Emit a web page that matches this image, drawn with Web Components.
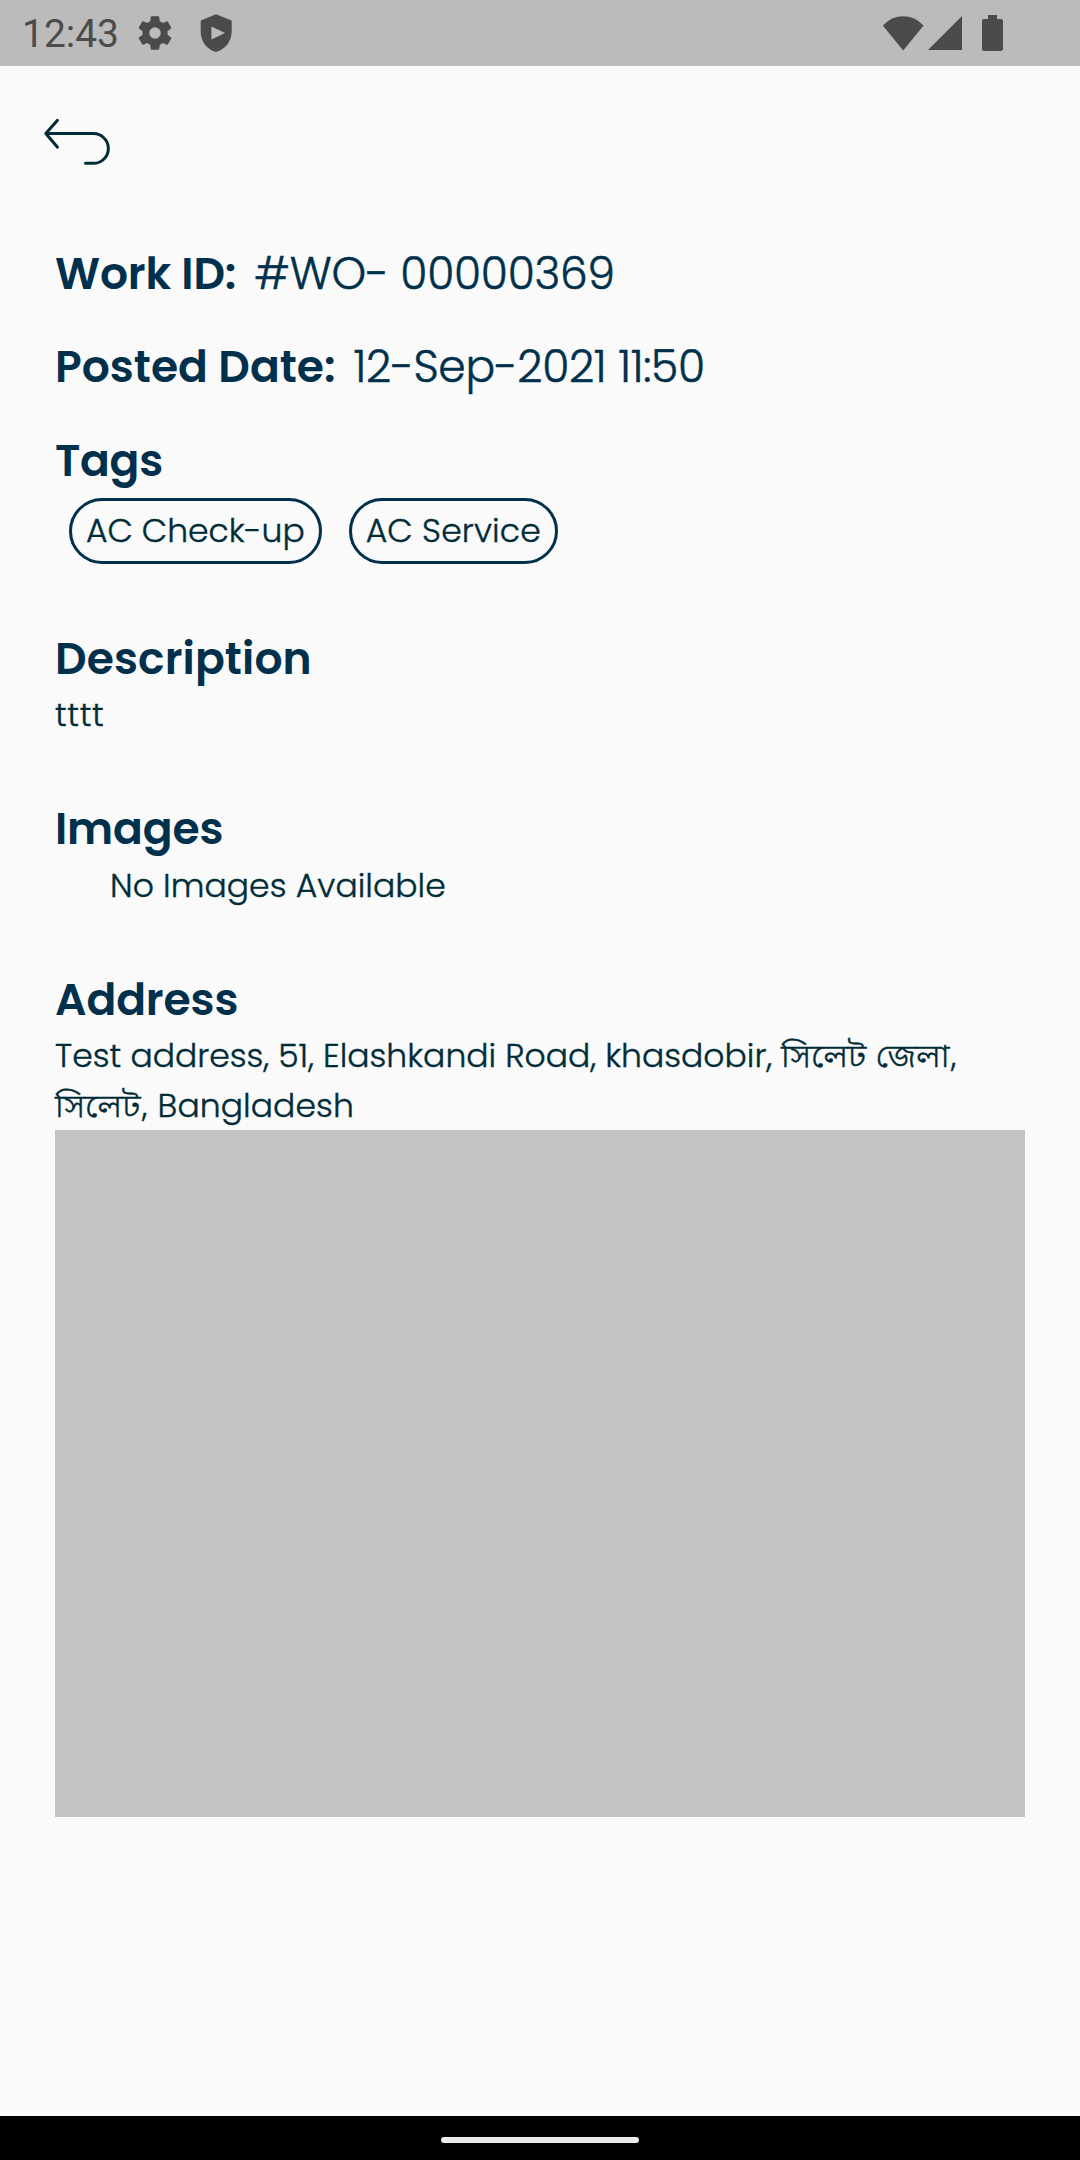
<!DOCTYPE html>
<html lang="en">
<head>
<meta charset="utf-8">
<title>Work order</title>
<style>
html,body{margin:0;padding:0;background:#fafafa}
body{font-family:Poppins,Inter,"Noto Sans Bengali","Noto Sans",sans-serif}
</style>
</head>
<body>
<work-order-screen></work-order-screen>
<script>
const mount=(el,html)=>{el.attachShadow({mode:'open'}).innerHTML=html;};

// Text run. "w" scales it to an exact width; "ls" sets its tracking in px.
customElements.define('fit-text',class extends HTMLElement{
  connectedCallback(){
    mount(this,`<style>:host{display:block;white-space:pre;flex:none}span{display:inline-block}</style><span><slot></slot></span>`);
    const span=this.shadowRoot.querySelector('span');
    if(this.hasAttribute('ls'))span.style.letterSpacing=this.getAttribute('ls')+'px';
    const w=+this.getAttribute('w');
    if(!w)return;
    const k=w/span.getBoundingClientRect().width;
    span.style.transformOrigin='0 50%';span.style.transform=`scaleX(${k})`;
    this.style.width=w+'px';
  }
});

customElements.define('status-bar',class extends HTMLElement{
  connectedCallback(){mount(this,`<style>
    :host{display:flex;align-items:center;height:66px;background:#bbb;color:#4b4b4b;font:400 39px/68px Roboto,sans-serif;box-sizing:border-box;padding-left:22px}
    svg{display:block;flex:none;fill:#4b4b4b}
    fit-text{margin-top:2px}
    .gear{margin-left:15px}.shield{margin-left:21px}.wifi{margin-left:auto}.signal{margin-left:4px}.battery{margin:0 77px 0 20px}
  </style>
  <fit-text w="97">12:43</fit-text>
  <svg class="gear" width="42" height="42" viewBox="0 0 24 24"><path d="M19.14 12.94c.04-.3.06-.61.06-.94s-.02-.64-.07-.94l2.03-1.58a.5.5 0 0 0 .12-.61l-1.92-3.32a.49.49 0 0 0-.59-.22l-2.39.96a7 7 0 0 0-1.62-.94l-.36-2.54a.48.48 0 0 0-.48-.41h-3.84a.48.48 0 0 0-.47.41l-.36 2.54c-.59.24-1.13.57-1.62.94l-2.39-.96a.49.49 0 0 0-.59.22L2.740 8.870a.48.48 0 0 0 .12.610l2.030 1.580a7.600 7.600 0 0 0 0 1.880l-2.030 1.580a.5.5 0 0 0-.12.610l1.920 3.320c.12.220.37.290.59.220l2.390-.96c.5.380 1.030.7 1.620.94l.36 2.540c.05.240.24.410.48.410h3.840c.24 0 .44-.17.470-.41l.36-2.540a7 7 0 0 0 1.620-.94l2.390.96c.22.080.47 0 .59-.22l1.920-3.320a.48.48 0 0 0-.12-.61zM12 15.300a3.300 3.300 0 1 1 0-6.600 3.300 3.300 0 0 1 0 6.600z"/></svg>
  <svg class="shield" width="38" height="38" viewBox="0 0 38 38"><path fill-rule="evenodd" d="M19 .3 34 6.2Q34.7 6.500 34.700 7.500V17C34.700 27 29 35 19 38 9 35 3.700 27 3.700 17V7.500Q3.700 6.500 4.400 6.200ZM14.400 12.500V25.500L28 19Z"/></svg>
  <svg class="wifi" width="42" height="35" viewBox="0 0 42 35"><path d="M.8 9.500Q9.500.3 21.200.3T41.600 9.500L21.200 34.500Z"/></svg>
  <svg class="signal" width="34" height="34" viewBox="0 0 34 34"><path d="M34 0V34H0Z"/></svg>
  <svg class="battery" width="21" height="36" viewBox="0 0 21 36"><path d="M6 0h9v4h4q2 0 2 2v28q0 2-2 2H2q-2 0-2-2V6q0-2 2-2h4z"/></svg>`);}
});

customElements.define('back-button',class extends HTMLElement{
  connectedCallback(){mount(this,`<style>:host{display:block;height:178px;box-sizing:border-box;padding:51px 0 0 43px}svg{display:block}</style>
  <svg width="70" height="50" viewBox="0 0 70 50" fill="none" stroke="#002c38" stroke-width="3" stroke-linecap="round" stroke-linejoin="round"><path d="M14.500 3.300 2.800 16.600 14.500 30.200M2.800 16.600H50.500A14.800 14.800 0 0 1 50.500 46.300H42.500"/></svg>`);}
});

customElements.define('field-row',class extends HTMLElement{
  connectedCallback(){mount(this,`<style>:host{display:flex;height:60px;font-size:44px;line-height:60px;color:#00304b;margin-bottom:33.300px}
  ::slotted([slot=label]){font-weight:600}::slotted([slot=value]){font-weight:300;margin-left:18px;-webkit-text-stroke:.5px #00304b}</style><slot name="label"></slot><slot name="value"></slot>`);}
});

customElements.define('info-section',class extends HTMLElement{
  connectedCallback(){mount(this,`<style>:host{display:block;color:#002c38;font-size:33px;line-height:50px;font-weight:300}
  ::slotted(:not([slot])){-webkit-text-stroke:.4px #002c38}
  .t{height:var(--title-h,61px);font-size:44px;line-height:60px;font-weight:600;color:#00304b;display:flex}</style><div class="t"><slot name="title"></slot></div><slot></slot>`);}
});

customElements.define('tag-list',class extends HTMLElement{
  connectedCallback(){mount(this,`<style>:host{display:flex;gap:27px;padding-left:14px;height:66px}</style><slot></slot>`);}
});
customElements.define('tag-chip',class extends HTMLElement{
  connectedCallback(){mount(this,`<style>:host{display:block;box-sizing:border-box;height:66px;border:3px solid #00304b;border-radius:33px;padding:5px 14px 0;line-height:50px}</style><slot></slot>`);}
});
customElements.define('text-line',class extends HTMLElement{
  connectedCallback(){mount(this,`<style>:host{display:flex;align-items:baseline;height:50px;overflow:visible}</style><slot></slot>`);}
});
customElements.define('map-placeholder',class extends HTMLElement{
  connectedCallback(){mount(this,`<style>:host{display:block;height:687px;background:#c4c4c4;margin-top:-.3px}</style>`);}
});
customElements.define('nav-bar',class extends HTMLElement{
  connectedCallback(){mount(this,`<style>:host{display:flex;align-items:center;justify-content:center;height:44px;background:#000}i{display:block;width:198px;height:6px;border-radius:3px;background:#ebebeb;margin-top:4px}</style><i></i>`);}
});

customElements.define('work-order-screen',class extends HTMLElement{
  connectedCallback(){mount(this,`<style>
  :host{display:flex;flex-direction:column;height:2160px;width:1080px;overflow:hidden;background:#fafafa}
  main{flex:1;padding:0 55px}
  .bn{font-family:"Noto Sans Bengali","Noto Sans",sans-serif}
  </style>
  <status-bar></status-bar>
  <back-button></back-button>
  <main>
    <field-row><fit-text slot="label" ls="-.15">Work ID:</fit-text><fit-text slot="value" ls="-.25">#WO- 00000369</fit-text></field-row>
    <field-row><fit-text slot="label">Posted Date:</fit-text><fit-text slot="value" ls="-.3">12-Sep-2021 11:50</fit-text></field-row>
    <info-section style="--title-h:67px;margin-bottom:65px"><fit-text slot="title" ls="-.3">Tags</fit-text>
      <tag-list><tag-chip><fit-text ls="-.05">AC Check-up</fit-text></tag-chip><tag-chip><fit-text ls=".15">AC Service</fit-text></tag-chip></tag-list></info-section>
    <info-section style="margin-bottom:59px"><fit-text slot="title" ls=".12">Description</fit-text><text-line><fit-text ls=".6">tttt</fit-text></text-line></info-section>
    <info-section style="margin-bottom:60px"><fit-text slot="title" ls="-.15">Images</fit-text><text-line style="padding-left:55px"><fit-text ls=".06" style="margin-top:1px">No Images Available</fit-text></text-line></info-section>
    <info-section><fit-text slot="title" ls="-.1">Address</fit-text>
      <text-line><fit-text ls=".015">Test address, 51, Elashkandi Road, khasdobir, </fit-text><fit-text class="bn" w="176.5">সিলেট জেলা,</fit-text></text-line>
      <text-line><fit-text class="bn" w="93.5">সিলেট,</fit-text><fit-text ls=".08"> Bangladesh</fit-text></text-line></info-section>
    <map-placeholder></map-placeholder>
  </main>
  <nav-bar></nav-bar>`);}
});
</script>
</body>
</html>
